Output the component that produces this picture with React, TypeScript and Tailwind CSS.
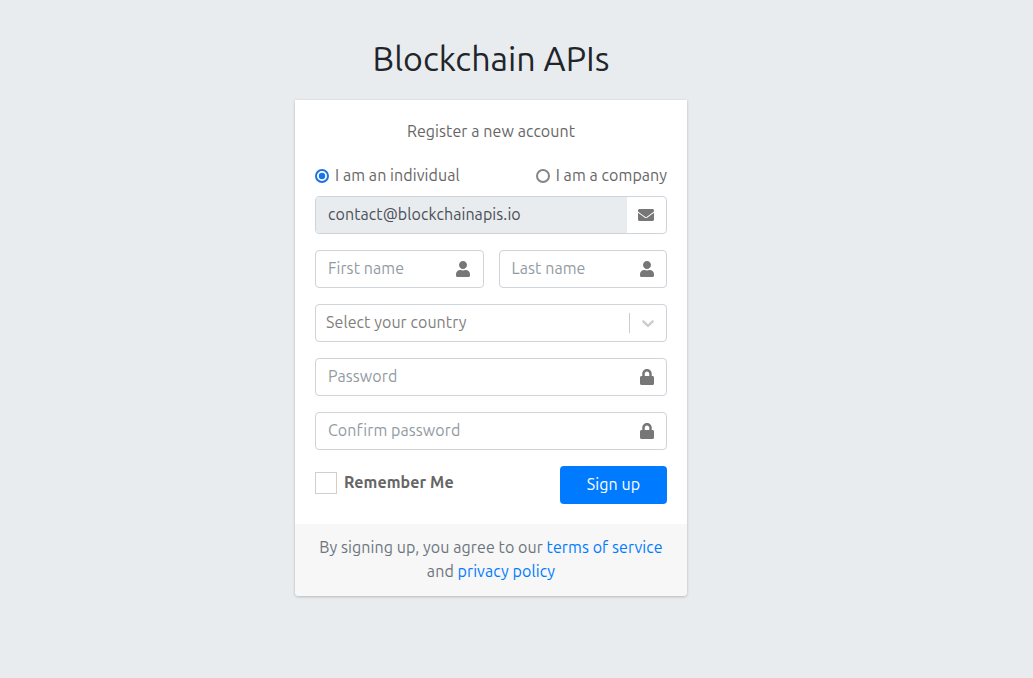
import { FaEnvelope, FaLock, FaUser } from "react-icons/fa";
import type { ReactNode } from "react";

function Field({ placeholder, icon }: { placeholder: string; icon: ReactNode }) {
  return (
    <div className="flex h-[38px] min-w-0 flex-1 items-center rounded border border-[#ced4da] bg-white pr-[11.4px] pl-3">
      <input
        className="w-full min-w-0 flex-1 bg-transparent pb-0.5 leading-6 tracking-[0.08px] outline-none placeholder:text-[#939ba2]"
        placeholder={placeholder}
      />
      <span className="flex w-4 justify-center text-base text-[#777]">{icon}</span>
    </div>
  );
}

export default function App() {
  return (
    <main className="flex min-h-screen w-full flex-col bg-[#e9ecef] pt-8 pl-[295px] font-['Ubuntu','Noto_Sans',sans-serif] text-base leading-6 tracking-[0.08px] text-[#666]">
      <div className="w-[392px]">
        <h1 className="mb-[15px] text-center text-[34px] leading-[53px] tracking-normal whitespace-nowrap text-[#212529]">
          Blockchain APIs
        </h1>
        <section className="overflow-hidden rounded-b bg-white shadow-[0_0_1px_rgba(0,0,0,0.125),0_1px_3px_rgba(0,0,0,0.2)]">
          <div className="h-[424px] px-5 pt-[19px]">
            <p className="text-center">Register a new account</p>
            <div className="mt-5 flex h-6 items-center justify-between whitespace-nowrap">
              <label className="flex items-center gap-1.5">
                <svg className="mt-0.5" width="14" height="14" viewBox="0 0 14 14">
                  <circle cx="7" cy="7" r="6" fill="#fff" stroke="#1a73e8" strokeWidth="2" />
                  <circle cx="7" cy="7" r="3.2" fill="#1a73e8" />
                </svg>
                <span>I am an individual</span>
              </label>
              <label className="flex items-center gap-1.5">
                <svg className="mt-0.5" width="14" height="14" viewBox="0 0 14 14">
                  <circle cx="7" cy="7" r="6" fill="#fff" stroke="#858585" strokeWidth="2" />
                </svg>
                <span>I am a company</span>
              </label>
            </div>
            <div className="mt-[9px] flex h-[38px] overflow-hidden rounded border border-[#ced4da]">
              <div className="flex-1 bg-[#e9ecef] pt-[5px] pl-3 text-[#495057]">
                <span>contact@blockchainapis.io</span>
              </div>
              <div className="flex w-[39px] items-center pl-[11px] text-[#777]">
                <FaEnvelope size={16} />
              </div>
            </div>
            <div className="mt-4 flex gap-[15px]">
              <Field placeholder="First name" icon={<FaUser />} />
              <Field placeholder="Last name" icon={<FaUser />} />
            </div>
            <div className="mt-4 flex h-[38px] items-center rounded border border-[#ced4da] pl-2.5 text-[#808080]">
              <span className="flex-1 pb-0.5">Select your country</span>
              <span className="h-5 w-px bg-[#ccc]" />
              <span className="flex w-9 items-center justify-center text-[#ccc]">
                <svg width="20" height="20" viewBox="0 0 20 20" fill="currentColor">
                  <path d="M4.516 7.548c0.436-0.446 1.043-0.481 1.576 0l3.908 3.747 3.908-3.747c0.533-0.481 1.141-0.446 1.574 0 0.436 0.445 0.408 1.197 0 1.615-0.406 0.418-4.695 4.502-4.695 4.502-0.217 0.223-0.502 0.335-0.787 0.335s-0.57-0.112-0.789-0.335c0 0-4.287-4.084-4.695-4.502s-0.436-1.17 0-1.615z" />
                </svg>
              </span>
            </div>
            <div className="mt-4 flex">
              <Field placeholder="Password" icon={<FaLock />} />
            </div>
            <div className="mt-4 flex">
              <Field placeholder="Confirm password" icon={<FaLock />} />
            </div>
            <div className="mt-4 flex items-start justify-between">
              <label className="flex pt-1">
                <span className="mt-0.5 mr-[7px] size-[22px] border border-[#d3cfc8]" />
                <span className="font-bold whitespace-nowrap">Remember Me</span>
              </label>
              <button className="h-[38px] w-[107px] rounded bg-[#007bff] pb-0.5 text-white">Sign up</button>
            </div>
          </div>
          <footer className="h-[72px] bg-[#f7f7f7] pt-[11px] text-center whitespace-nowrap text-[#6c757d]">
            <div>
              By signing up, you agree to our <a className="text-[#007bff]">terms of service</a>
            </div>
            <div>
              and <a className="text-[#007bff]">privacy policy</a>
            </div>
          </footer>
        </section>
      </div>
    </main>
  );
}
